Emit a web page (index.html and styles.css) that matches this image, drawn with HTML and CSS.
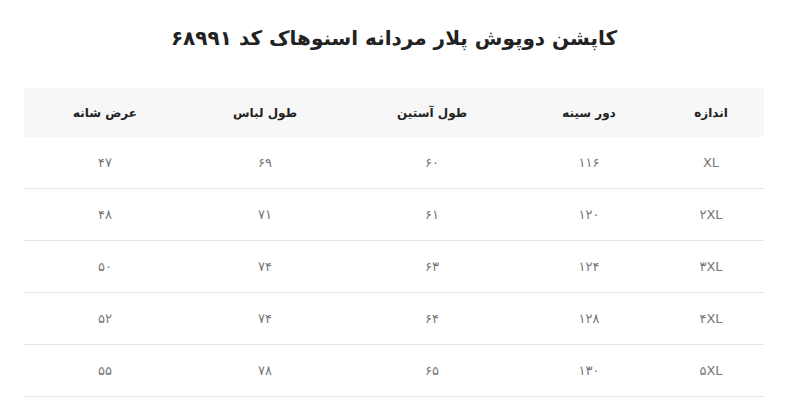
FILE: index.html
```html
<!DOCTYPE html>
<html lang="fa" dir="rtl">
<head>
<meta charset="utf-8">
<link rel="stylesheet" href="styles.css">
</head>
<body>
<div class="page">
  <h1 class="title">کاپشن دوپوش پلار مردانه اسنوهاک کد ۶۸۹۹۱</h1>
  <table class="size-table">
    <thead>
      <tr>
        <th class="c1">اندازه</th>
        <th class="c2">دور سینه</th>
        <th class="c3">طول آستین</th>
        <th class="c4">طول لباس</th>
        <th class="c5">عرض شانه</th>
      </tr>
    </thead>
    <tbody>
      <tr><td>XL</td><td>۱۱۶</td><td>۶۰</td><td>۶۹</td><td>۴۷</td></tr>
      <tr><td>۲XL</td><td>۱۲۰</td><td>۶۱</td><td>۷۱</td><td>۴۸</td></tr>
      <tr><td>۳XL</td><td>۱۲۴</td><td>۶۳</td><td>۷۴</td><td>۵۰</td></tr>
      <tr><td>۴XL</td><td>۱۲۸</td><td>۶۴</td><td>۷۴</td><td>۵۲</td></tr>
      <tr><td>۵XL</td><td>۱۳۰</td><td>۶۵</td><td>۷۸</td><td>۵۵</td></tr>
    </tbody>
  </table>
</div>
</body>
</html>
```
FILE: styles.css
```css
html, body {
  margin: 0;
  padding: 0;
  background: #fff;
}
body {
  font-family: "DejaVu Sans", "Noto Sans", sans-serif;
}
.page {
  padding: 20px 23px 0 24px;
}
.title {
  margin: 0 0 32px;
  height: 36px;
  line-height: 36px;
  font-size: 20px;
  font-weight: bold;
  color: #222;
  text-align: center;
}
.size-table {
  width: 740px;
  border-collapse: collapse;
  table-layout: fixed;
}
.size-table th {
  height: 49px;
  padding: 0;
  background: #f7f7f7;
  font-size: 12px;
  font-weight: bold;
  color: #222;
  text-align: center;
  vertical-align: middle;
}
.size-table td {
  height: 51px;
  padding: 0;
  border-bottom: 1px solid #e4e4e4;
  font-size: 13px;
  color: #777;
  text-align: center;
  vertical-align: middle;
}
.c1 { width: 106px; }
.c2 { width: 138px; }
.c3 { width: 176px; }
.c4 { width: 158px; }
.c5 { width: 162px; }
```
